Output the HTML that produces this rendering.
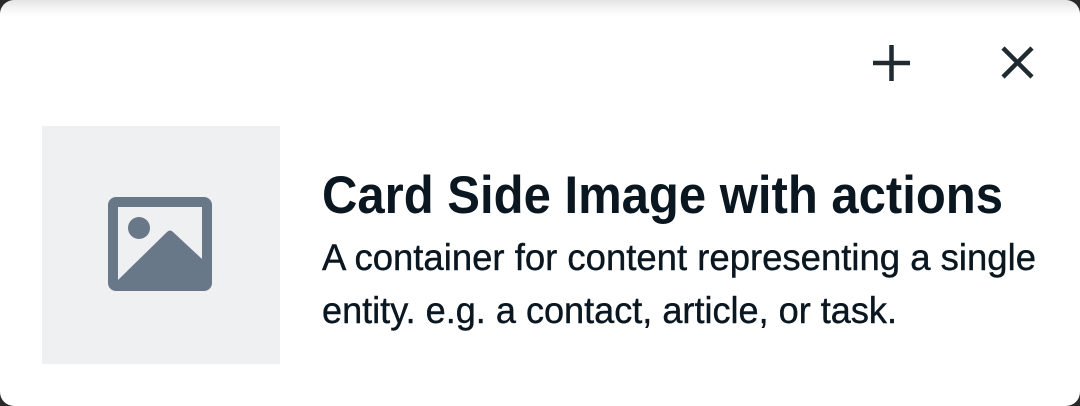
<!DOCTYPE html>
<html><head><meta charset="utf-8"><style>
html,body{margin:0;padding:0;width:1080px;height:406px;overflow:hidden;background:#2a2a2a}
.card{position:absolute;left:0;top:0;width:1080px;height:406px;border-radius:14px;background:linear-gradient(#e4e4e4 0px,#f4f4f4 8px,#fff 16px,#fff 100%);overflow:hidden}
svg{position:absolute;left:0;top:0}
</style></head><body>
<div class="card">
<svg width="1080" height="406" viewBox="0 0 1080 406">
<rect x="42" y="126" width="238" height="238" fill="#eff0f2"/>
<rect x="113" y="202" width="94" height="84" rx="3" fill="none" stroke="#687889" stroke-width="10"/>
<circle cx="139" cy="228" r="11" fill="#687889"/>
<path d="M118 280 L167 232 Q170 229 173 232 L202 259 L202 286 L118 286 Z" fill="#687889"/>
<path d="M873 63 H910 M891.5 45 V81" stroke="#1f2a31" stroke-width="4.5" fill="none"/>
<path d="M1003 48 L1032 77 M1032 48 L1003 77" stroke="#1f2a31" stroke-width="4.5" fill="none"/>
<g font-family="Liberation Sans, sans-serif" fill="#0a1620">
<text x="322" y="213" font-size="53" font-weight="bold" textLength="681" lengthAdjust="spacingAndGlyphs">Card Side Image with actions</text>
<text x="322" y="270" font-size="37" stroke="#0a1620" stroke-width="0.4" textLength="714" lengthAdjust="spacingAndGlyphs">A container for content representing a single</text>
<text x="322" y="323" font-size="37" stroke="#0a1620" stroke-width="0.4" textLength="575" lengthAdjust="spacingAndGlyphs">entity. e.g. a contact, article, or task.</text>
</g>
</svg>
</div>
</body></html>
